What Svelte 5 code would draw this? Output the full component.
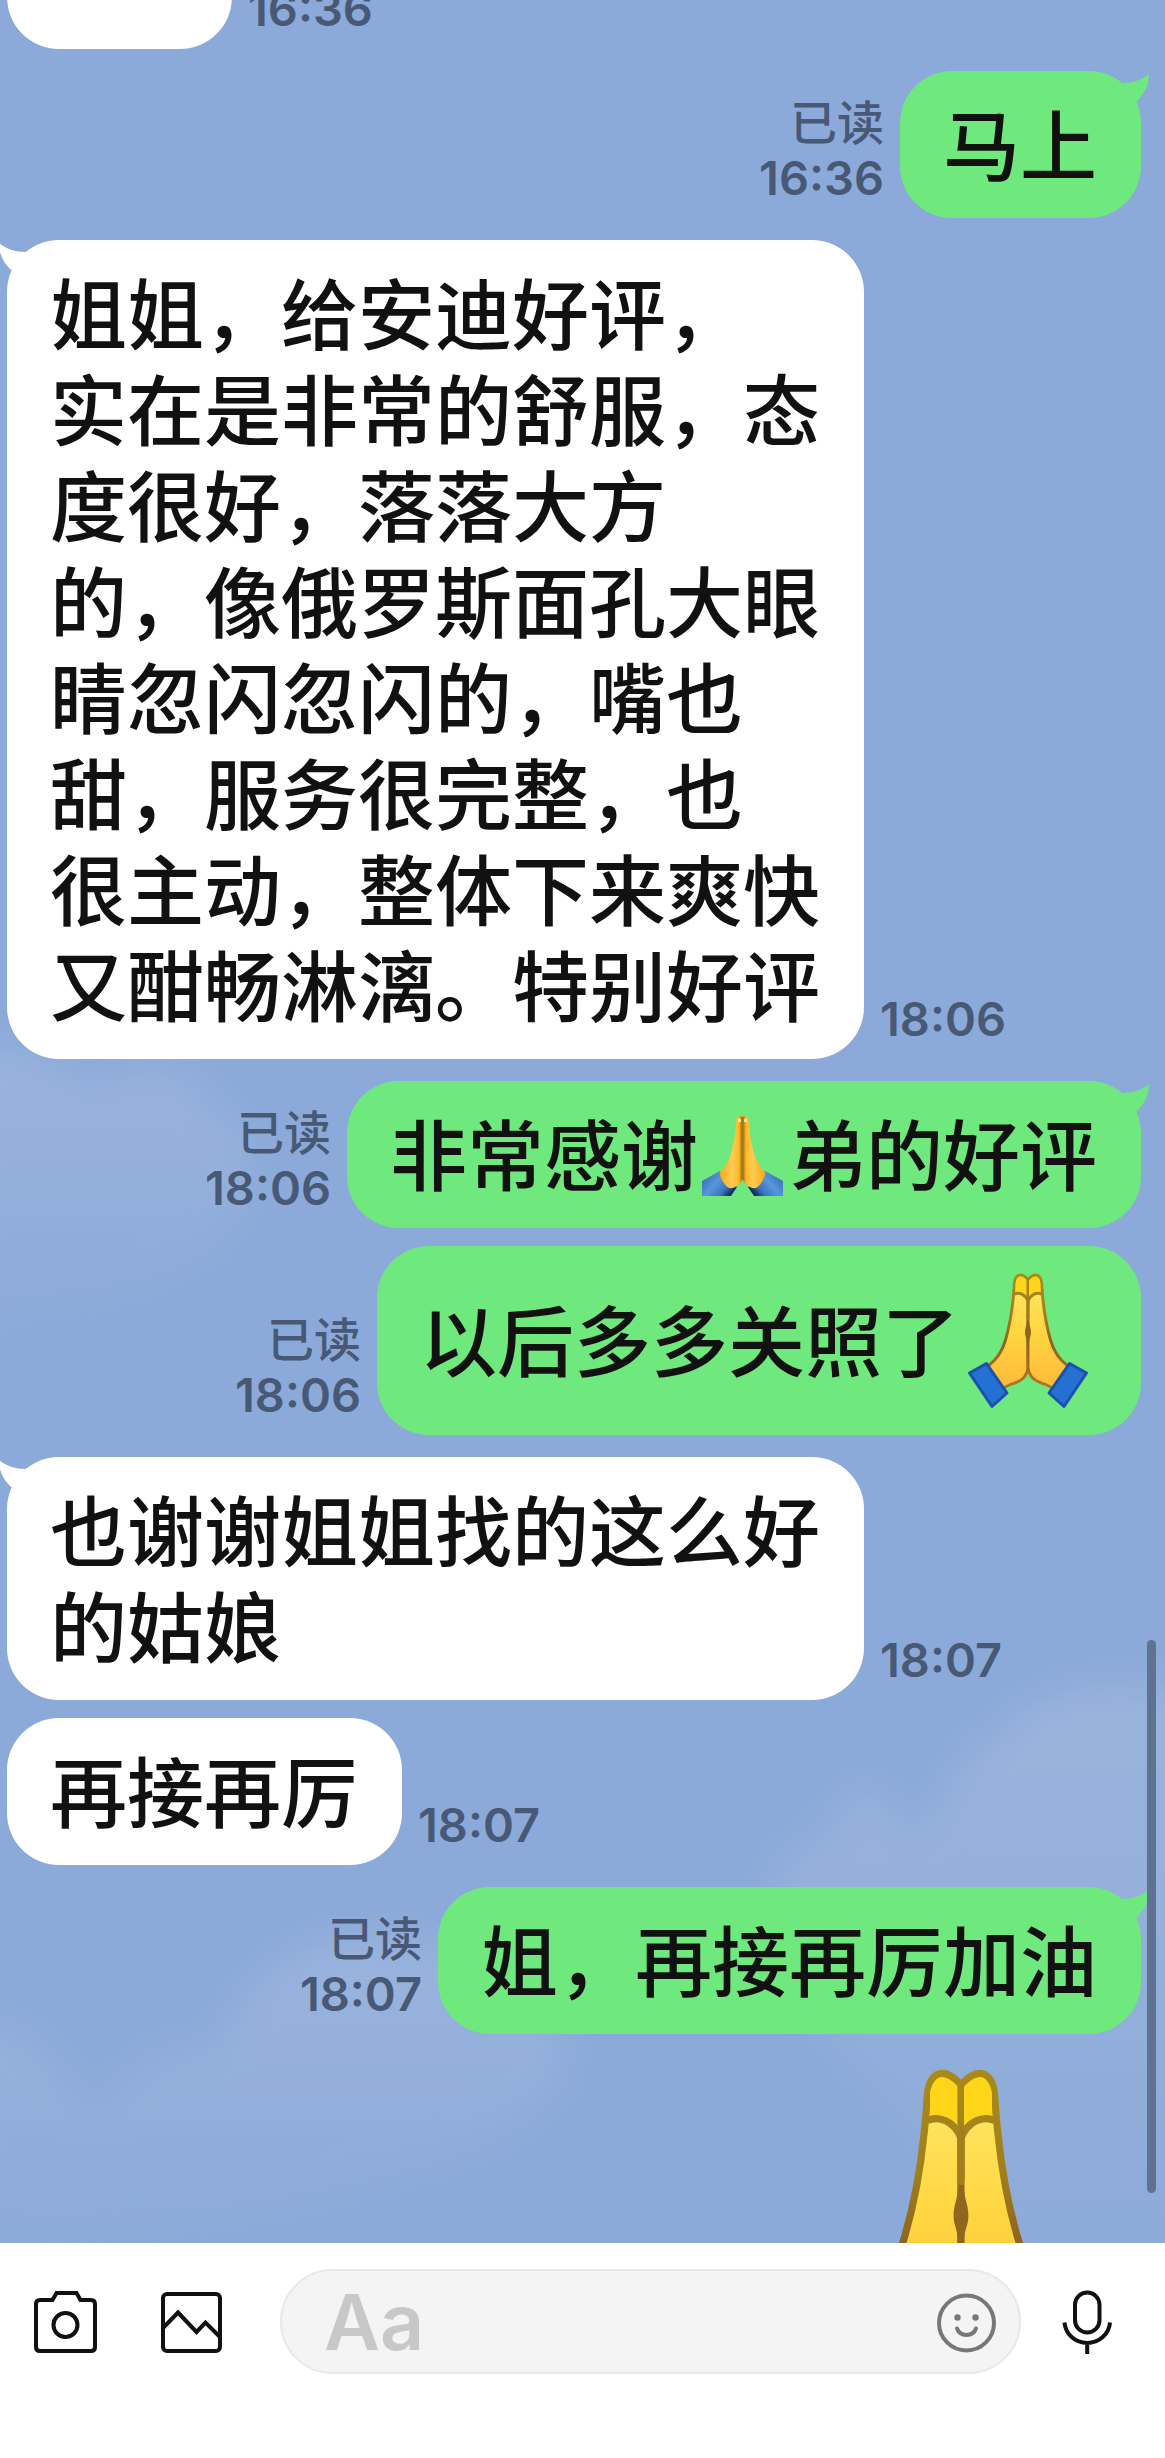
<script>
  // parts: plain strings are text, "small" / "big" entries are emoji
  const messages = [
    { from: "them", blank: true, time: "16:36", parts: [] },
    { from: "me", first: true, time: "16:36", parts: ["马上"] },
    {
      from: "them",
      first: true,
      time: "18:06",
      parts: [
        "姐姐，给安迪好评，\n实在是非常的舒服，态\n度很好，落落大方\n的，像俄罗斯面孔大眼\n睛忽闪忽闪的，嘴也\n甜，服务很完整，也\n很主动，整体下来爽快\n又酣畅淋漓。特别好评",
      ],
    },
    {
      from: "me",
      first: true,
      time: "18:06",
      parts: ["非常感谢", { emoji: "small" }, "弟的好评"],
    },
    { from: "me", time: "18:06", parts: ["以后多多关照了", { emoji: "big" }] },
    {
      from: "them",
      first: true,
      time: "18:07",
      parts: ["也谢谢姐姐找的这么好\n的姑娘"],
    },
    { from: "them", time: "18:07", parts: ["再接再厉"] },
    { from: "me", first: true, time: "18:07", parts: ["姐，再接再厉加油"] },
  ];

  let draft = $state("");
</script>

{#snippet prayHands()}
  <svg class="pray" viewBox="0 0 138 138" role="img" aria-label="🙏">
    <defs>
      <linearGradient id="skin" x1="0" y1="0" x2="0" y2="1">
        <stop offset="0" stop-color="#ffd310" />
        <stop offset="0.17" stop-color="#ffe25c" />
        <stop offset="0.5" stop-color="#ffd640" />
        <stop offset="1" stop-color="#fdb93a" />
      </linearGradient>
      <linearGradient id="edge" x1="0" y1="0" x2="0" y2="1">
        <stop offset="0" stop-color="#a88a18" />
        <stop offset="0.35" stop-color="#a07f1c" />
        <stop offset="0.6" stop-color="#8d6420" />
        <stop offset="1" stop-color="#b5761f" />
      </linearGradient>
      <!-- left half, mirrored for the right one -->
      <g id="hand">
        <path
          d="M69 7.500C66 4.500 64 3 61.500 3C58 3 56 6.500 55.500 11C55 17 54.800 22 54 28C53 38 50.500 54 46.500 68C43.500 79 37 88 29 94L44 117C50 110 60 113 66 104C68 101 69 98 69 95Z"
          fill="url(#skin)"
          stroke="url(#edge)"
          stroke-width="2.900"
          stroke-linejoin="round"
        />
        <path
          d="M56.500 21V11C57 7 59 4.600 61.500 4.600C64 4.600 66 6.500 67.800 8.500V26C65 22 60 19.500 56.500 21Z"
          fill="#ffd51a"
        />
        <path
          d="M55.500 22C60 20 66 22 69 29"
          fill="none"
          stroke="#a58419"
          stroke-width="2.900"
        />
        <path
          d="M27.500 91.500L10.500 101L33 134.500L48 121Z"
          fill="#2471d2"
          stroke="#1c50ae"
          stroke-width="3"
          stroke-linejoin="round"
        />
      </g>
    </defs>
    <use href="#hand" />
    <use href="#hand" transform="matrix(-1 0 0 1 138 0)" />
    <path d="M69 24L67.500 27V46L69 50L70.500 46V27Z" fill="#a07f1c" />
    <path
      d="M68 48C67.600 54 66 56 66 60.500C66 64 67.600 66 68 71H70C70.400 66 72 64 72 60.500C72 56 70.400 54 70 48Z"
      fill="#8f6520"
    />
  </svg>
{/snippet}

{#snippet prayInline()}
  <svg class="pray-inline" viewBox="0 0 81 81" role="img" aria-label="🙏">
    <defs>
      <linearGradient id="palm" x1="0" y1="0" x2="1" y2="0">
        <stop offset="0" stop-color="#f9a90f" />
        <stop offset="0.55" stop-color="#ffcb52" />
        <stop offset="0.85" stop-color="#fdb827" />
        <stop offset="1" stop-color="#a55c00" />
      </linearGradient>
      <linearGradient id="sleeve" x1="0" y1="0" x2="1" y2="0.6">
        <stop offset="0" stop-color="#2c62a8" />
        <stop offset="0.5" stop-color="#5796dd" />
        <stop offset="0.8" stop-color="#3a74bd" />
        <stop offset="1" stop-color="#0e2f5f" />
      </linearGradient>
      <g id="half">
        <path d="M0 66L18 56L35 72L29 81H0Z" fill="url(#sleeve)" />
        <path
          d="M40.500 2C38 0 35 1 34.500 4C33.500 15 33 22 30.500 32C29 41 25 50 17.500 58C19 64 22 70 27 73C32 74 38 70 40.500 64Z"
          fill="url(#palm)"
        />
      </g>
    </defs>
    <use href="#half" />
    <use href="#half" transform="matrix(-1 0 0 1 81 0)" />
    <path d="M36 5C36 3 39 3 39 5V7H36ZM42 5C42 3 45 3 45 5V7H42Z" fill="#ffe2a0" />
  </svg>
{/snippet}

<div class="screen">
  <main class="chat">
    <svg class="sky" viewBox="0 0 1165 2243" preserveAspectRatio="none" aria-hidden="true">
      <defs>
        <filter id="soft"><feGaussianBlur stdDeviation="18" /></filter>
        <linearGradient id="fade" x1="0" y1="0" x2="0" y2="1">
          <stop offset="0" stop-color="#a3bbdf" />
          <stop offset="1" stop-color="#8caad9" />
        </linearGradient>
      </defs>
      <g filter="url(#soft)" fill="url(#fade)" opacity="0.600">
        <path d="M-40 1060C20 1030 60 1080 100 1085C150 1060 200 1070 210 1110C260 1120 260 1180 230 1220C180 1300 60 1290 -40 1340Z" />
        <path d="M770 1890C790 1850 800 1840 830 1840C840 1780 880 1770 900 1830C960 1820 940 1760 1000 1735C1030 1690 1100 1680 1200 1690V2300H1000C970 2100 780 2060 770 1890Z" />
        <path d="M-40 2020C10 2020 60 2060 90 2110C120 2100 130 2050 200 2050C240 2040 230 1990 290 1960C330 1930 400 1930 460 1960C560 2000 600 2060 520 2120C420 2180 160 2240 -40 2260Z" />
      </g>
    </svg>

    {#each messages as message}
      <div class="row {message.from}" class:first={message.first} class:cut={message.blank}>
        <div class="bubble" class:blank={message.blank}>
          {#if message.first}
            <svg class="tail" viewBox="0 0 28 28" aria-hidden="true">
              <path d="M28 0C21 6 12 9 1 9L6 27H16C23 20 28 12 28 0Z" fill="currentColor" />
            </svg>
          {/if}
          {#each message.parts as part}
            {#if part.emoji === "small"}
              {@render prayInline()}
            {:else if part.emoji === "big"}
              {@render prayHands()}
            {:else}
              <span class="text">{part}</span>
            {/if}
          {/each}
        </div>
        <div class="meta">
          {#if message.from === "me"}
            <span>已读</span>
          {/if}
          <time>{message.time}</time>
        </div>
      </div>
    {/each}

    <div class="sticker">{@render prayHands()}</div>
    <div class="scrollbar"></div>
  </main>

  <footer class="composer">
    <button class="icon" aria-label="相机">
      <svg viewBox="0 0 64 64">
        <path d="M19.500 10L23.500 3H43.500L47.500 10H58Q62 10 62 14V57Q62 61 58 61H7Q3 61 3 57V14Q3 10 7 10Z" />
        <circle cx="32.500" cy="35" r="12" />
      </svg>
    </button>
    <button class="icon" aria-label="照片">
      <svg viewBox="0 0 64 64">
        <rect x="3" y="4" width="57" height="57" rx="4" />
        <path d="M3.500 37.500L18 22.500L36.500 42L45.500 32.500L60 47" />
      </svg>
    </button>
    <div class="field">
      <input type="text" placeholder="Aa" aria-label="输入信息" bind:value={draft} />
      <button class="icon smile" aria-label="表情">
        <svg viewBox="0 0 64 64">
          <circle cx="31.500" cy="33" r="27.500" />
          <circle class="dot" cx="22.500" cy="27.500" r="3.200" />
          <circle class="dot" cx="40.500" cy="27.500" r="3.200" />
          <path d="M22 38.500C25 47 38 47 41 38.500" stroke-linecap="round" />
        </svg>
      </button>
    </div>
    <button class="icon mic" aria-label="语音">
      <svg viewBox="0 0 64 64">
        <rect x="20" y="2.500" width="24.500" height="40" rx="12.200" />
        <path d="M9.500 32.500C10.500 44 20 53 32.200 53S54 44 55 32.500M32.200 53V64" />
      </svg>
    </button>
  </footer>
</div>

<style>
  :global(body) {
    margin: 0;
    background: #fff;
  }

  .screen {
    display: flex;
    flex-direction: column;
    height: 100vh;
    font-family: Inter, "Noto Sans CJK SC", sans-serif;
  }

  .chat {
    position: relative;
    flex: 1;
    min-height: 0;
    display: flex;
    flex-direction: column;
    padding: 0 24px 0 7px;
    overflow: hidden;
    background: #8caad9;
  }

  .sky {
    position: absolute;
    inset: 0;
    width: 100%;
    height: 100%;
  }

  .row {
    position: relative;
    flex: none;
    display: flex;
    align-items: flex-end;
    gap: 16px;
    margin-top: 18px;
  }

  .row.first {
    margin-top: 22px;
  }

  .row.me {
    flex-direction: row-reverse;
  }

  /* scrolled half out of view */
  .row.cut {
    margin-top: -98px;
  }

  .bubble {
    position: relative;
    display: flex;
    align-items: center;
    padding: 26px 44px 25px 43px;
    border-radius: 52px;
    background: #fff;
    color: #111;
  }

  .me .bubble {
    background: #6fe87e;
  }

  .bubble.blank {
    box-sizing: border-box;
    width: 225px;
    height: 147px;
  }

  .text {
    margin: -3px 0 3px;
    font-family: "Noto Sans CJK SC", sans-serif;
    font-size: 77px;
    font-weight: 500;
    line-height: 96px;
    white-space: pre;
  }

  .tail {
    position: absolute;
    top: 3px;
    right: -8px;
    width: 28px;
    height: 28px;
    color: #6fe87e;
  }

  .them .tail {
    right: auto;
    left: -8px;
    color: #fff;
    transform: scaleX(-1);
  }

  .pray {
    width: 138px;
    height: 138px;
  }

  .pray-inline {
    width: 81px;
    height: 81px;
    margin: 0 6px 0 4px;
  }

  .meta {
    display: flex;
    flex-direction: column;
    align-items: flex-end;
    padding-bottom: 13px;
    color: #485976;
    font-size: 47px;
    font-weight: 500;
    line-height: 55px;
  }

  .meta time {
    font-weight: 600;
  }

  .sticker {
    position: relative;
    flex: none;
    align-self: flex-end;
    margin-top: 18px;
    padding: 14px 9px 0;
  }

  .sticker .pray {
    display: block;
    width: 342px;
    height: 342px;
  }

  .scrollbar {
    position: absolute;
    top: 1640px;
    right: 9px;
    width: 9px;
    height: 553px;
    border-radius: 5px;
    background: #5f7291;
  }

  .composer {
    flex: none;
    display: flex;
    align-items: center;
    padding: 26px 46px 84px 33px;
    background: #fff;
  }

  .icon {
    flex: none;
    width: 64px;
    height: 64px;
    margin: 0;
    padding: 0;
    border: 0;
    background: none;
    color: #111;
    cursor: pointer;
  }

  .icon + .icon {
    margin-left: 63px;
  }

  .icon svg {
    display: block;
    width: 64px;
    height: 64px;
    fill: none;
    stroke: currentColor;
    stroke-width: 4;
  }

  .field {
    flex: 1;
    min-width: 0;
    box-sizing: border-box;
    display: flex;
    align-items: center;
    height: 105px;
    margin-left: 56px;
    padding: 0 20px 0 42px;
    border: 2px solid #e8e8e8;
    border-radius: 53px;
    background: #f4f4f4;
  }

  input {
    flex: 1;
    min-width: 0;
    height: 96px;
    padding: 0;
    border: 0;
    outline: 0;
    background: none;
    color: #111;
    font: 600 77px/96px Inter, "Noto Sans CJK SC", sans-serif;
  }

  input::placeholder {
    color: #c8c8c8;
    opacity: 1;
  }

  .smile {
    color: #777;
  }

  .smile .dot {
    fill: currentColor;
    stroke: none;
  }

  .mic {
    margin-left: 34px;
  }
</style>
